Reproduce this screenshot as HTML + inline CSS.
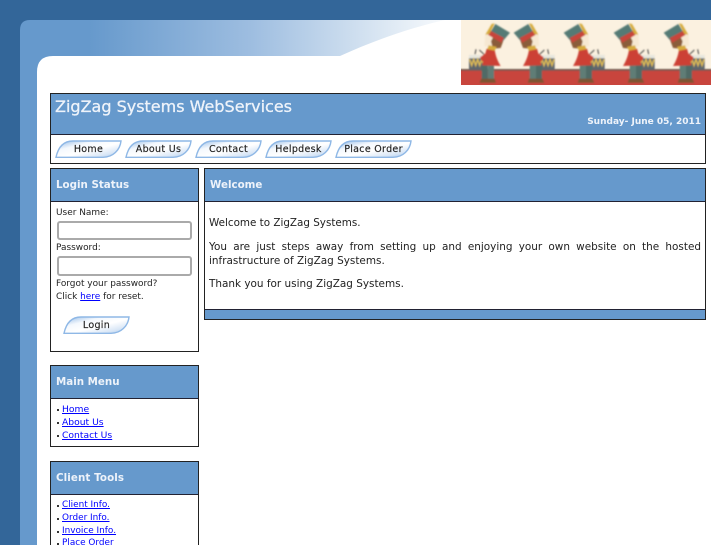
<!DOCTYPE html>
<html>
<head>
<meta charset="utf-8">
<style>
html,body{margin:0;padding:0;background:#fff;width:727px;height:545px;overflow:hidden;}
#w{position:relative;width:727px;height:545px;overflow:hidden;font-family:"DejaVu Sans","Liberation Sans",sans-serif;color:#222;}
.a{position:absolute;box-sizing:border-box;white-space:nowrap;}
.box{border:1px solid #222;background:#fff;}
.hd{background:#6699cc;border-bottom:1px solid #223;}
.t{color:#eef3fa;font-weight:bold;font-size:10.3px;line-height:14px;}
a{color:#00f;text-decoration:underline;}
.s{font-size:8.95px;color:#222;line-height:13px;}
.l{font-size:9.2px;line-height:13px;left:62px;}
.k{font-size:8.9px;}
.d{width:2px;height:2px;background:#333;left:57px;}
.btn{font-size:9.5px;color:#222;text-align:center;line-height:19px;height:18px;letter-spacing:.3px;-webkit-text-stroke:.15px #222;}
.btn svg{position:absolute;left:0;top:0;}
.btn span{position:relative;}
.inp{background:#fff;border:2px solid #aaa;border-radius:3px;}
.m{font-size:10.37px;color:#222;line-height:14px;}
</style>
</head>
<body>
<div id="w">
<svg class="a" style="left:0;top:0" width="727" height="545" viewBox="0 0 727 545">
<defs>
<linearGradient id="g" x1="0" x2="1" y1="0" y2="0">
<stop offset="0" stop-color="#6699cc"/>
<stop offset=".12" stop-color="#6699cc"/>
<stop offset=".5" stop-color="#9dbde0"/>
<stop offset=".8" stop-color="#d8e5f2"/>
<stop offset="1" stop-color="#ffffff"/>
</linearGradient>
<linearGradient id="b" x1="0" x2="1" y1="0" y2="1">
<stop offset="0" stop-color="#8fb8e6"/>
<stop offset=".3" stop-color="#f4f8fd"/>
<stop offset=".55" stop-color="#ffffff"/>
<stop offset=".8" stop-color="#d8e6f6"/>
<stop offset="1" stop-color="#98bde8"/>
</linearGradient>
<filter id="bl"><feGaussianBlur stdDeviation="2.6"/></filter>
<g id="sol">
<rect x="518" y="165" width="53" height="10" fill="#e6e6de"/>
<rect x="518" y="175" width="53" height="35" fill="#5e666c"/>
<path d="M521,178 L527,196 L533,178 L539,196 L545,178 L551,196 L557,178 L563,196 L569,178" stroke="#e2be52" stroke-width="4" fill="none"/>
<path d="M526,163 L540,150 M553,163 L550,148" stroke="#444" stroke-width="3"/>
<rect x="496" y="192" width="19" height="46" fill="#5f7d76"/>
<rect x="515" y="192" width="18" height="46" fill="#4f6a66"/>
<path d="M494,236 L516,236 L516,248 L490,248 Z" fill="#7d5533"/>
<path d="M514,236 L534,236 L540,248 L514,248 Z" fill="#7d5533"/>
<path d="M494,148 L518,146 L532,196 L476,198 C486,182 492,165 494,148 Z" fill="#cc4034"/>
<path d="M510,152 L538,172 L532,184 L504,174 Z" fill="#cc4034"/>
<path d="M492,108 L522,102 L525,138 L494,146 Z" fill="#f6e8d2"/>
<path d="M468,122 L497,108 L505,124 L499,146 L476,144 Z" fill="#8a5c3a"/>
<path d="M448,98 L492,72 L510,102 L470,124 Z" fill="#557a75"/>
<path d="M466,114 L507,92 L514,104 L474,128 Z" fill="#c8453a"/>
<path d="M494,70 L503,72 L522,104 L510,102 Z" fill="#d6ac3c"/>
<path d="M488,140 L512,136 L516,148 L494,152 Z" fill="#d6ac3c"/>
</g>
</defs>
<rect x="0" y="0" width="711" height="545" fill="#336699"/>
<path d="M711,20 L30,20 Q20,20 20,30 L20,545 L711,545 Z" fill="#6699cc"/>
<rect x="38" y="20" width="423" height="37" fill="url(#g)"/>
<path d="M37,545 L37,72 Q37,56 53,56 L340,56 C375,40 410,28 445,20 L711,20 L711,545 Z" fill="#fff"/>
<svg x="461" y="20" width="250" height="65" viewBox="0 0 750 195">
<rect width="750" height="195" fill="#fbf1e0"/>
<g filter="url(#bl)">
<rect x="-10" y="147" width="770" height="58" fill="#c8443c"/>
<rect x="-10" y="147" width="770" height="5" fill="#6e5a50"/>
<g transform="translate(-290,-60)">
<use href="#sol" transform="translate(885,0) scale(-1,1)"/>
<use href="#sol"/>
<use href="#sol" transform="translate(150,0)"/>
<use href="#sol" transform="translate(300,0)"/>
<use href="#sol" transform="translate(450,0)"/>
</g>
</g>
</svg>
</svg>

<!-- Header -->
<div class="a box" style="left:50px;top:93px;width:656px;height:71px;"></div>
<div class="a hd" style="left:51px;top:94px;width:654px;height:41px;"></div>
<div class="a" style="left:55px;top:97px;font-size:16px;line-height:20px;color:#eef3fa;-webkit-text-stroke:.3px #eef3fa;">ZigZag Systems WebServices</div>
<div class="a t" style="right:26px;top:116px;font-size:9px;line-height:13px;">Sunday- June 05, 2011</div>

<!-- Nav -->
<div class="a btn" style="left:55px;top:140px;width:67px;"><svg width="67" height="18"><path d="M1,17.3 C3,8 8,1 18,1 L66,1 C65,10 58,17.3 48,17.3 Z" fill="url(#b)" stroke="#8fb8e6" stroke-width="1.4"/></svg><span>Home</span></div>
<div class="a btn" style="left:125px;top:140px;width:67px;"><svg width="67" height="18"><path d="M1,17.3 C3,8 8,1 18,1 L66,1 C65,10 58,17.3 48,17.3 Z" fill="url(#b)" stroke="#8fb8e6" stroke-width="1.4"/></svg><span>About Us</span></div>
<div class="a btn" style="left:195px;top:140px;width:67px;"><svg width="67" height="18"><path d="M1,17.3 C3,8 8,1 18,1 L66,1 C65,10 58,17.3 48,17.3 Z" fill="url(#b)" stroke="#8fb8e6" stroke-width="1.4"/></svg><span>Contact</span></div>
<div class="a btn" style="left:265px;top:140px;width:67px;"><svg width="67" height="18"><path d="M1,17.3 C3,8 8,1 18,1 L66,1 C65,10 58,17.3 48,17.3 Z" fill="url(#b)" stroke="#8fb8e6" stroke-width="1.4"/></svg><span>Helpdesk</span></div>
<div class="a btn" style="left:335px;top:140px;width:77px;"><svg width="77" height="18"><path d="M1,17.3 C3,8 8,1 18,1 L76,1 C75,10 68,17.3 58,17.3 Z" fill="url(#b)" stroke="#8fb8e6" stroke-width="1.4"/></svg><span>Place Order</span></div>

<!-- Login -->
<div class="a box" style="left:50px;top:168px;width:149px;height:184px;"></div>
<div class="a hd" style="left:51px;top:169px;width:147px;height:33px;"></div>
<div class="a t" style="left:56px;top:178px;">Login Status</div>
<div class="a s" style="left:56px;top:207px;">User Name:</div>
<div class="a inp" style="left:57px;top:221px;width:135px;height:19px;"></div>
<div class="a s" style="left:56px;top:242px;">Password:</div>
<div class="a inp" style="left:57px;top:256px;width:135px;height:20px;"></div>
<div class="a s" style="left:56px;top:278px;">Forgot your password?</div>
<div class="a s" style="left:56px;top:291px;">Click <a>here</a> for reset.</div>
<div class="a btn" style="left:63px;top:316px;width:67px;"><svg width="67" height="18"><path d="M1,17.3 C3,8 8,1 18,1 L66,1 C65,10 58,17.3 48,17.3 Z" fill="url(#b)" stroke="#8fb8e6" stroke-width="1.4"/></svg><span>Login</span></div>

<!-- Main Menu -->
<div class="a box" style="left:50px;top:365px;width:149px;height:82px;"></div>
<div class="a hd" style="left:51px;top:366px;width:147px;height:33px;"></div>
<div class="a t" style="left:56px;top:375px;">Main Menu</div>
<div class="a d" style="top:409px;"></div><div class="a l" style="top:403px;"><a>Home</a></div>
<div class="a d" style="top:422px;"></div><div class="a l" style="top:416px;"><a>About Us</a></div>
<div class="a d" style="top:435px;"></div><div class="a l" style="top:429px;"><a>Contact Us</a></div>

<!-- Client Tools -->
<div class="a box" style="left:50px;top:461px;width:149px;height:100px;"></div>
<div class="a hd" style="left:51px;top:462px;width:147px;height:33px;"></div>
<div class="a t" style="left:56px;top:471px;letter-spacing:.1px;">Client Tools</div>
<div class="a d" style="top:505px;"></div><div class="a l k" style="top:499px;"><a>Client Info.</a></div>
<div class="a d" style="top:518px;"></div><div class="a l k" style="top:512px;"><a>Order Info.</a></div>
<div class="a d" style="top:531px;"></div><div class="a l k" style="top:525px;"><a>Invoice Info.</a></div>
<div class="a d" style="top:543px;"></div><div class="a l k" style="top:537px;"><a>Place Order</a></div>

<!-- Content -->
<div class="a box" style="left:204px;top:168px;width:502px;height:152px;"></div>
<div class="a hd" style="left:205px;top:169px;width:500px;height:33px;"></div>
<div class="a t" style="left:210px;top:178px;">Welcome</div>
<div class="a m" style="left:209px;top:216px;">Welcome to ZigZag Systems.</div>
<div class="a m" style="left:209px;top:240px;width:492px;white-space:normal;text-align:justify;font-size:10.45px;">You are just steps away from setting up and enjoying your own website on the hosted infrastructure of ZigZag Systems.</div>
<div class="a m" style="left:209px;top:277px;font-size:10.45px;">Thank you for using ZigZag Systems.</div>
<div class="a" style="left:205px;top:309px;width:500px;height:10px;background:#6699cc;border-top:1px solid #223;"></div>
</div>
</body>
</html>
